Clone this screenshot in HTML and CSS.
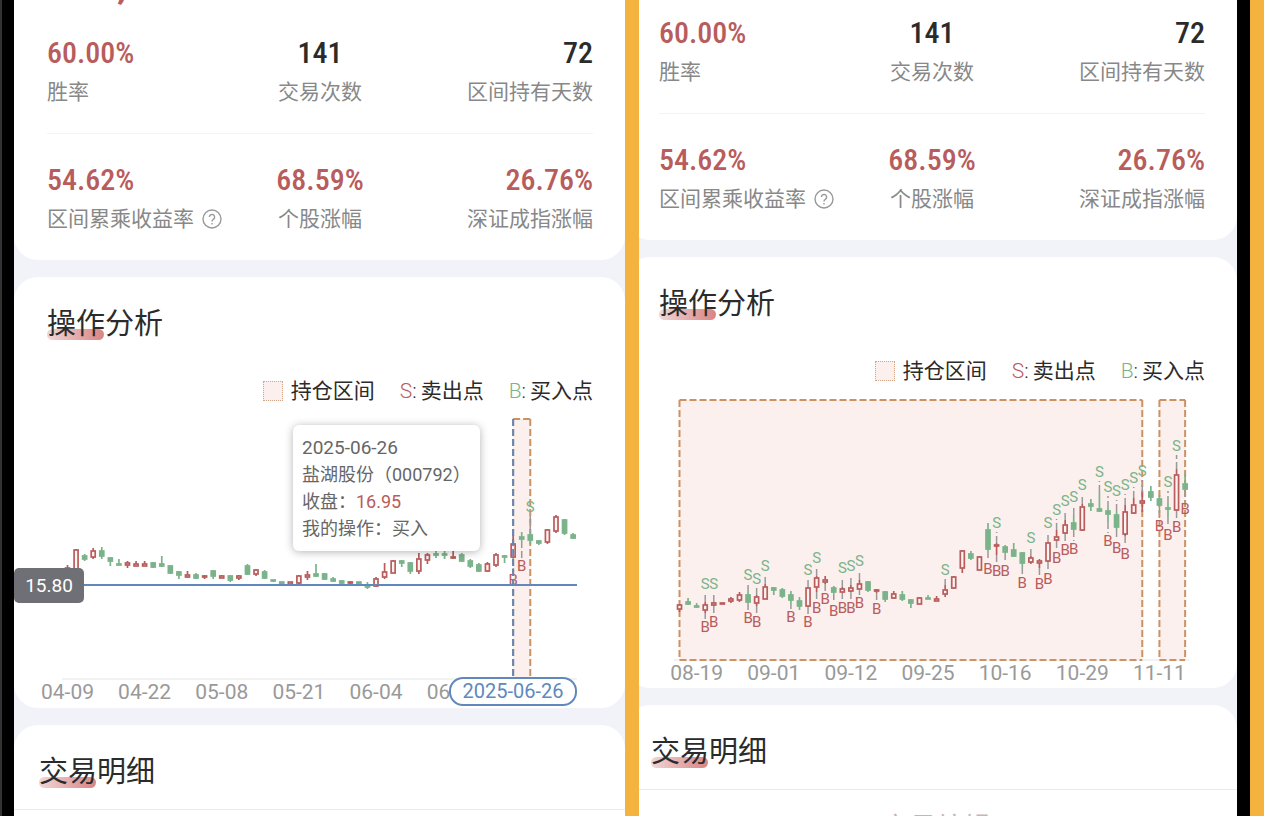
FILE: index.html
```html
<!DOCTYPE html>
<html lang="zh-CN">
<head>
    <meta charset="UTF-8">
    <meta name="viewport" content="width=device-width, initial-scale=1.0">
    <title>操作分析</title>
    <link rel="stylesheet" href="styles.css">
</head>

<body>
    <section class="shot shot-left">
        <main class="page">
            <section class="card card-top">
                <p class="total">,</p>
                <div class="stats">
                    <div class="stat">
                        <strong class="value red">60.00%</strong>
                        <span class="label">胜率</span>
                    </div>
                    <div class="stat">
                        <strong class="value">141</strong>
                        <span class="label">交易次数</span>
                    </div>
                    <div class="stat">
                        <strong class="value">72</strong>
                        <span class="label">区间持有天数</span>
                    </div>
                </div>
                <div class="stats">
                    <div class="stat">
                        <strong class="value red">54.62%</strong>
                        <span class="label">区间累乘收益率
                            <button class="help" aria-label="说明">
                                <svg viewBox="0 0 20 20"><circle cx="10" cy="10" r="9"/><path d="M7.4 8.1a2.6 2.6 0 1 1 4.2 2c-1 .8-1.6 1.2-1.6 2.3M10 14v1.4"/></svg>
                            </button>
                        </span>
                    </div>
                    <div class="stat">
                        <strong class="value red">68.59%</strong>
                        <span class="label">个股涨幅</span>
                    </div>
                    <div class="stat">
                        <strong class="value red">26.76%</strong>
                        <span class="label">深证成指涨幅</span>
                    </div>
                </div>
            </section>

            <section class="card">
                <h2 class="title">操作分析</h2>
                <ul class="legend">
                    <li><i class="swatch"></i>持仓区间</li>
                    <li><span><b class="sell-key">S</b>:</span>卖出点</li>
                    <li><span><b class="buy-key">B</b>:</span>买入点</li>
                </ul>
                <div class="chart">
                    <svg id="chartLeft" viewBox="0 406 611 302" role="img" aria-label="K线图"></svg>
                    <div class="tooltip">
                        <p class="tooltip-date">2025-06-26</p>
                        <p>盐湖股份（000792）</p>
                        <p>收盘：<span class="red">16.95</span></p>
                        <p>我的操作：买入</p>
                    </div>
                </div>
            </section>

            <section class="card card-details">
                <h2 class="title">交易明细</h2>
            </section>
        </main>
    </section>

    <section class="shot shot-right">
        <main class="page">
            <section class="card card-top">
                <div class="stats">
                    <div class="stat">
                        <strong class="value red">60.00%</strong>
                        <span class="label">胜率</span>
                    </div>
                    <div class="stat">
                        <strong class="value">141</strong>
                        <span class="label">交易次数</span>
                    </div>
                    <div class="stat">
                        <strong class="value">72</strong>
                        <span class="label">区间持有天数</span>
                    </div>
                </div>
                <div class="stats">
                    <div class="stat">
                        <strong class="value red">54.62%</strong>
                        <span class="label">区间累乘收益率
                            <button class="help" aria-label="说明">
                                <svg viewBox="0 0 20 20"><circle cx="10" cy="10" r="9"/><path d="M7.4 8.1a2.6 2.6 0 1 1 4.2 2c-1 .8-1.6 1.2-1.6 2.3M10 14v1.4"/></svg>
                            </button>
                        </span>
                    </div>
                    <div class="stat">
                        <strong class="value red">68.59%</strong>
                        <span class="label">个股涨幅</span>
                    </div>
                    <div class="stat">
                        <strong class="value red">26.76%</strong>
                        <span class="label">深证成指涨幅</span>
                    </div>
                </div>
            </section>

            <section class="card">
                <h2 class="title">操作分析</h2>
                <ul class="legend">
                    <li><i class="swatch"></i>持仓区间</li>
                    <li><span><b class="sell-key">S</b>:</span>卖出点</li>
                    <li><span><b class="buy-key">B</b>:</span>买入点</li>
                </ul>
                <div class="chart">
                    <svg id="chartRight" viewBox="0 386 611 302" role="img" aria-label="K线图"></svg>
                </div>
            </section>

            <section class="card card-details">
                <h2 class="title">交易明细</h2>
                <p class="details-head">交易编辑</p>
            </section>
        </main>
    </section>

    <script src="chart.js"></script>
</body>
</html>
```

FILE: styles.css
```css
:root {
    --color-red: #b85c5c;
    --color-green: #7bb38a;
    --color-text: #2b2b2b;
    --color-muted: #888888;
    --color-blue: #6088bd;
    --color-page: #f2f3f8;
    --color-frame: #f4b23f;
}

* {
    margin: 0;
    padding: 0;
    box-sizing: border-box;
}

body {
    display: flex;
    gap: 14px;
    height: 100vh;
    padding-right: 14px;
    border-left: 2px solid #333333;
    background-color: var(--color-frame);
    color: var(--color-text);
    font-family: Roboto, "Noto Sans CJK SC", sans-serif;
    overflow: hidden;
}

.shot {
    background-color: var(--color-page);
    overflow: hidden;
}

.shot-left {
    flex: 611 1 0;
    border-left: 12px solid #000;
}

.shot-right {
    flex: 598 1 0;
    border-right: 13px solid #000;
}

/* the second page is cut off a little on its left side */
.shot-right .page {
    margin-left: -13px;
}

.page {
    display: flex;
    flex-direction: column;
    gap: 17px;
}

.card {
    padding-top: 27px;
    border-radius: 24px;
    background-color: #fff;
}

.card-top {
    padding: 15px 32px 0 33px;
    border-radius: 0 0 24px 24px;
}

.shot-left .card-top {
    padding-top: 0;
}

.total {
    height: 35px;
    margin-top: -15px;
    margin-bottom: 15px;
    padding-left: 70px;
    color: var(--color-red);
    font-size: 40px;
    font-weight: 700;
    line-height: 0;
}

.stats {
    display: grid;
    grid-template-columns: repeat(3, 1fr);
    padding-bottom: 26px;
}

.stats + .stats {
    padding-top: 28px;
    border-top: 1px solid #f3f3f3;
}

.stat {
    display: flex;
    flex-direction: column;
    gap: 6px;
    white-space: nowrap;
}

.stat:nth-child(2) {
    align-items: center;
}

.stat:nth-child(3) {
    align-items: flex-end;
}

.value {
    font-family: "Roboto Condensed", "Liberation Sans Narrow", Roboto, sans-serif;
    font-size: 30px;
    font-weight: 500;
    line-height: 36px;
}

.red {
    color: var(--color-red);
}

.label {
    display: flex;
    align-items: center;
    gap: 8px;
    color: var(--color-muted);
    font-size: 21px;
    line-height: 30px;
}

.help {
    width: 20px;
    height: 20px;
    border: none;
    background: none;
    cursor: pointer;
}

.help svg {
    display: block;
    fill: none;
    stroke: #999;
    stroke-width: 1.4;
}

.title {
    position: relative;
    z-index: 0;
    margin-left: 33px;
    font-size: 29px;
    font-weight: 400;
    line-height: 40px;
}

.title::before {
    content: "";
    position: absolute;
    z-index: -1;
    left: 0;
    bottom: 4px;
    width: 57px;
    height: 11px;
    border-radius: 6px;
    background: linear-gradient(to right, #f0d6d6, #d98583);
}

.legend {
    display: flex;
    justify-content: flex-end;
    gap: 25px;
    margin: 32px 32px 0 0;
    list-style: none;
    font-size: 21px;
    line-height: 30px;
}

.legend li {
    display: flex;
    align-items: center;
    gap: 4px;
}

.legend span {
    font-weight: 300;
}

.legend b {
    font-weight: 350;
}

.sell-key {
    color: var(--color-red);
}

.buy-key {
    color: var(--color-green);
}

.swatch {
    width: 20px;
    height: 20px;
    margin-right: 4px;
    border: 1px dotted #d0a58a;
    background-color: #fbf0ee;
}

.chart {
    position: relative;
}

.chart svg {
    display: block;
    width: 100%;
}

.tooltip {
    position: absolute;
    left: 279px;
    top: 19px;
    width: 187px;
    padding: 9px;
    border-radius: 6px;
    background-color: #fff;
    box-shadow: 0 1px 8px rgba(0, 0, 0, 0.3);
    color: #666;
    font-size: 18px;
    line-height: 27px;
    white-space: nowrap;
}

.tooltip-date {
    font-size: 19px;
}

.card-details {
    height: 400px;
}

.card-details .title {
    margin-left: 25px;
}

.card-details .title::after {
    content: "";
    position: absolute;
    left: -25px;
    right: 0;
    bottom: -18px;
    height: 1px;
    background-color: #ececec;
}

.details-head {
    margin-top: 36px;
    padding-left: 10px;
    color: #c9b4b4;
    font-size: 27px;
    line-height: 40px;
    text-align: center;
}

/* chart */
.axis {
    stroke: #e6e6e6;
}

.axis-label {
    fill: #999;
    font-size: 21px;
    text-anchor: middle;
}

.zone {
    fill: #fbf0ee;
}

.zone-edge {
    fill: none;
    stroke: #cb9264;
    stroke-width: 2;
    stroke-dasharray: 7 3;
}

.link {
    stroke: #999;
    stroke-width: 1.5;
    stroke-dasharray: 7 3;
}

.up {
    fill: #fff4f2;
    stroke: var(--color-red);
    stroke-width: 1.7;
}

.down {
    fill: var(--color-green);
    stroke: var(--color-green);
    stroke-width: 1.7;
}

.mark {
    font-size: 15px;
    font-weight: 400;
    text-anchor: middle;
}

.mark-s {
    fill: var(--color-green);
}

.mark-b {
    fill: var(--color-red);
}

.cross {
    stroke: var(--color-blue);
    stroke-width: 2;
}

.cross-v {
    stroke-dasharray: 7 3;
}

.tag {
    fill: #6f7076;
}

.tag-text {
    fill: #fff;
    font-size: 19px;
    text-anchor: middle;
}

.pill {
    fill: #fff;
    stroke: var(--color-blue);
    stroke-width: 2;
}

.pill-text {
    fill: var(--color-blue);
    font-size: 20px;
    text-anchor: middle;
}
```

FILE: chart.js
```js
const STEP = 8.57;
const FIRST = 53.5;

// [r = up / g = down, high, body top, body bottom, low, S label y, B label y]
const left = [
    ['r', 565, 568, 580, 582], ['r', 549, 550, 572, 575], ['g', 554, 556, 559, 561], ['r', 548, 551, 557, 559],
    ['g', 547, 551, 556, 559], ['g', 557, 558, 561, 566], ['g', 559, 564, 565, 565], ['r', 561, 563, 565, 568],
    ['r', 561, 564, 566, 566], ['r', 561, 564, 566, 566], ['g', 562, 563, 567, 568], ['g', 556, 564, 566, 567],
    ['g', 565, 566, 573, 574], ['g', 571, 572, 575, 579], ['r', 571, 575, 577, 578], ['g', 573, 575, 578, 579],
    ['r', 575, 576, 577, 579], ['g', 570, 571, 576, 579], ['r', 575, 576, 578, 578], ['g', 575, 576, 580, 582],
    ['r', 575, 576, 578, 580], ['g', 564, 566, 574, 575], ['r', 569, 570, 574, 576], ['g', 570, 572, 578, 579],
    ['g', 580, 580, 581, 582], ['g', 582, 582, 584, 584], ['r', 582, 582, 584, 584], ['r', 575, 576, 583, 584],
    ['r', 571, 575, 577, 580], ['g', 564, 574, 576, 577], ['g', 573, 574, 579, 580], ['g', 577, 579, 581, 582],
    ['g', 580, 581, 583, 584], ['r', 581, 582, 583, 584], ['g', 582, 582, 584, 584], ['g', 582, 585, 587, 589],
    ['r', 577, 579, 586, 587], ['r', 563, 572, 577, 579], ['r', 560, 561, 573, 573], ['g', 560, 561, 563, 567],
    ['g', 562, 563, 571, 574], ['r', 553, 559, 571, 574], ['r', 553, 555, 560, 564], ['g', 551, 554, 555, 558],
    ['g', 551, 554, 555, 559], ['r', 551, 557, 558, 559], ['g', 553, 555, 561, 562], ['g', 559, 561, 566, 568],
    ['g', 563, 565, 571, 572], ['r', 562, 564, 571, 572], ['r', 553, 555, 565, 567], ['g', 555, 556, 557, 563],
    ['r', 535, 544, 557, 558, 0, 580], ['g', 532, 537, 539, 541, 0, 566], ['g', 533, 535, 540, 544, 507, 0], ['g', 540, 541, 543, 545],
    ['r', 529, 530, 542, 544], ['r', 515, 517, 531, 533], ['g', 519, 520, 533, 535], ['g', 533, 535, 538, 539]
];

const right = [
    ['r', 604, 605, 609, 612], ['g', 598, 602, 604, 605], ['g', 603, 606, 607, 608], ['r', 602, 605, 610, 613, 584, 627],
    ['r', 602, 603, 605, 606, 584, 622], ['r', 603, 603, 604, 604], ['r', 597, 599, 601, 603], ['r', 592, 595, 600, 602],
    ['g', 592, 595, 602, 603, 575, 618], ['r', 595, 597, 603, 606, 579, 622], ['r', 584, 587, 599, 599, 566, 0], ['g', 587, 588, 590, 595],
    ['g', 588, 590, 596, 598], ['g', 591, 595, 600, 604, 0, 617], ['g', 597, 601, 606, 610], ['r', 587, 588, 606, 607, 570, 622],
    ['r', 576, 578, 587, 592, 558, 608], ['r', 576, 580, 582, 584, 0, 599], ['g', 586, 588, 592, 593, 0, 611], ['r', 587, 589, 592, 592, 568, 608],
    ['r', 585, 588, 591, 592, 566, 608], ['r', 580, 584, 589, 589, 561, 603], ['g', 581, 582, 590, 592], ['r', 589, 590, 591, 593, 0, 609],
    ['g', 591, 592, 599, 602], ['r', 591, 594, 598, 599], ['g', 591, 595, 599, 601], ['g', 599, 600, 603, 608],
    ['r', 597, 598, 604, 604], ['g', 595, 598, 599, 599], ['r', 596, 599, 601, 601], ['r', 585, 590, 594, 597, 570, 0],
    ['r', 576, 577, 588, 589], ['r', 550, 551, 568, 573], ['g', 551, 554, 558, 560], ['r', 556, 557, 570, 570],
    ['g', 523, 530, 549, 551, 0, 569], ['r', 543, 545, 546, 555, 523, 571], ['g', 545, 547, 552, 553, 0, 571], ['g', 543, 550, 556, 557],
    ['g', 552, 553, 563, 567, 0, 583], ['r', 556, 558, 562, 564, 538, 0], ['r', 559, 561, 563, 568, 0, 584], ['r', 542, 543, 561, 562, 523, 579],
    ['r', 530, 537, 540, 541, 510, 558], ['r', 520, 525, 533, 534, 501, 550], ['g', 515, 523, 529, 530, 497, 549], ['r', 504, 507, 530, 531, 485, 0],
    ['g', 499, 504, 506, 511], ['g', 492, 509, 511, 512, 472, 0], ['g', 508, 511, 514, 522, 487, 541], ['g', 511, 515, 527, 530, 491, 548],
    ['r', 505, 512, 534, 536, 485, 554], ['r', 498, 505, 513, 514, 478, 0], ['r', 492, 501, 503, 512, 471, 0], ['g', 486, 492, 497, 501],
    ['g', 495, 499, 505, 506, 0, 526], ['g', 503, 508, 509, 517, 482, 535], ['r', 469, 475, 510, 511, 446, 527], ['g', 474, 484, 489, 490, 0, 509]
];

function xOf(i) {
    return FIRST + i * STEP;
}

function line(cls, x1, y1, x2, y2) {
    return `<line class="${cls}" x1="${x1}" y1="${y1}" x2="${x2}" y2="${y2}"/>`;
}

function text(cls, x, y, value) {
    return `<text class="${cls}" x="${x}" y="${y}">${value}</text>`;
}

function base(top, labels, firstLabel, zones) {
    const bottom = top + 260;
    let out = line('axis', 48, bottom, 563, bottom);
    zones.forEach(([a, b]) => {
        out += `<rect class="zone" x="${xOf(a)}" y="${top}" width="${xOf(b) - xOf(a)}" height="260"/>`;
        out += line('zone-edge', xOf(a), top, xOf(b), top);
        out += line('zone-edge', xOf(a), top, xOf(a), bottom);
        out += line('zone-edge', xOf(b), top, xOf(b), bottom);
        out += line('zone-edge', xOf(a), bottom, xOf(b), bottom);
    });
    labels.forEach((label, n) => {
        out += text('axis-label', xOf(firstLabel + n * 9), bottom + 20, label);
    });
    return out;
}

function candles(data) {
    return data.map(([color, high, top, bottom, low, s, b], i) => {
        const x = xOf(i);
        const cls = color === 'r' ? 'up' : 'down';
        let out = '';
        if (s) out += line('link', x, high, x, s + 9) + text('mark mark-s', x, s + 5, 'S');
        if (b) out += line('link', x, low, x, b - 8) + text('mark mark-b', x, b + 5, 'B');
        out += line(cls, x, high, x, low);
        out += `<rect class="${cls}" x="${x - 2}" y="${top}" width="4" height="${bottom - top}"/>`;
        return out;
    }).join('');
}

document.getElementById('chartLeft').innerHTML =
    base(419, ['04-09', '04-22', '05-08', '05-21', '06-04', '06-17'], 0, [[52, 54]]) +
    candles(left) +
    line('cross', 0, 585, 563, 585) +
    line('cross cross-v', xOf(52), 419, xOf(52), 678) +
    '<rect class="tag" x="0" y="568" width="70" height="35" rx="5"/>' +
    text('tag-text', 35, 592, '15.80') +
    '<rect class="pill" x="436" y="678" width="126" height="27" rx="13"/>' +
    text('pill-text', 499, 698, '2025-06-26');

document.getElementById('chartRight').innerHTML =
    base(400, ['08-19', '09-01', '09-12', '09-25', '10-16', '10-29', '11-11'], 2, [[0, 54], [56, 59]]) +
    candles(right);
```
